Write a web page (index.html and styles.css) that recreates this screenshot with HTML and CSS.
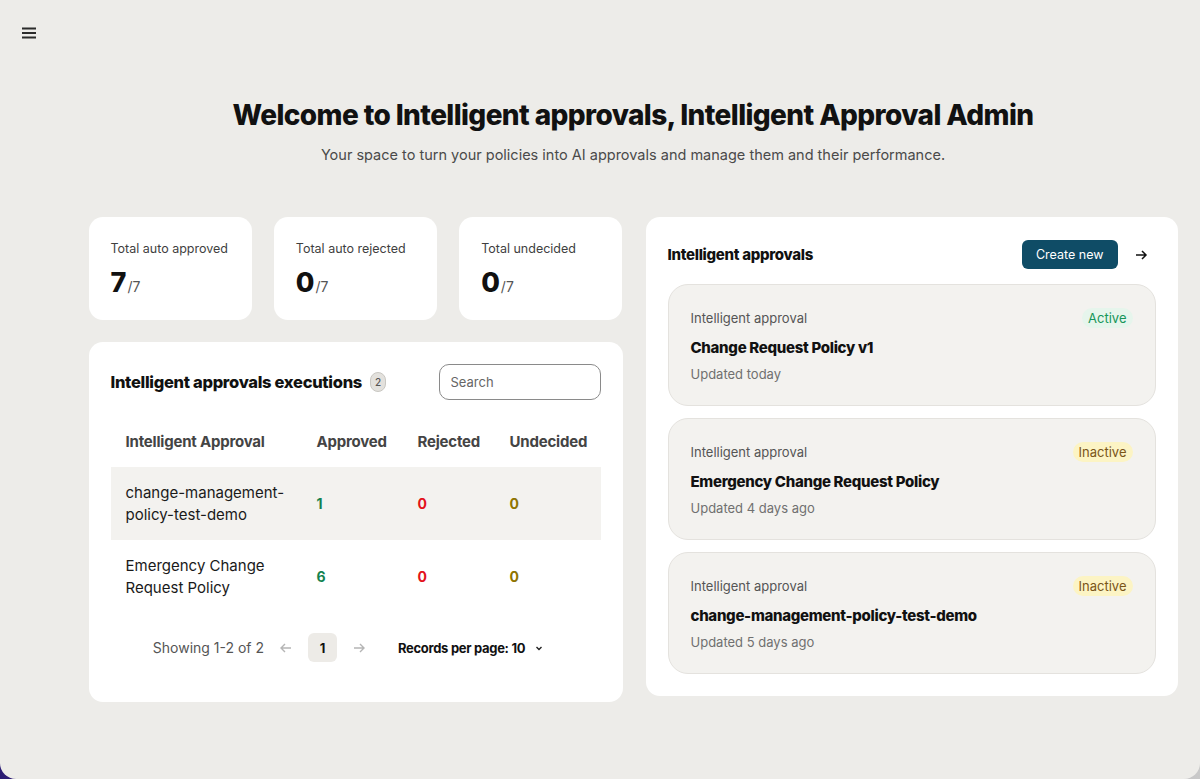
FILE: index.html
```html
<!DOCTYPE html>
<html lang="en">
  <head>
    <meta charset="UTF-8" />
    <meta name="viewport" content="width=device-width, initial-scale=1.0" />
    <title>Intelligent approvals</title>
    <link rel="stylesheet" href="styles.css">
  </head>
  <body>
    <div class="app">
      <aside class="rail">
        <button class="menu-button" aria-label="Menu">
          <svg width="16" height="12" viewBox="0 0 16 12">
            <path d="M1 1.5h14M1 6h14M1 10.5h14" stroke="#2b2b2b" stroke-width="1.8" fill="none" />
          </svg>
        </button>
      </aside>

      <main class="main">
        <header class="welcome">
          <h1>Welcome to Intelligent approvals, Intelligent Approval Admin</h1>
          <p>Your space to turn your policies into AI approvals and manage them and their performance.</p>
        </header>

        <div class="dashboard">
          <section class="left-column">
            <div class="stats">
              <div class="stat-card">
                <div class="stat-label">Total auto approved</div>
                <div class="stat-value">7<span>/7</span></div>
              </div>
              <div class="stat-card">
                <div class="stat-label">Total auto rejected</div>
                <div class="stat-value">0<span>/7</span></div>
              </div>
              <div class="stat-card">
                <div class="stat-label">Total undecided</div>
                <div class="stat-value">0<span>/7</span></div>
              </div>
            </div>

            <div class="card executions">
              <div class="executions-head">
                <h2>Intelligent approvals executions <span class="count">2</span></h2>
                <input class="search" type="text" placeholder="Search" />
              </div>

              <table class="exec-table">
                <colgroup>
                  <col class="col-name" />
                  <col class="col-approved" />
                  <col class="col-rejected" />
                  <col />
                </colgroup>
                <thead>
                  <tr>
                    <th>Intelligent Approval</th>
                    <th>Approved</th>
                    <th>Rejected</th>
                    <th>Undecided</th>
                  </tr>
                </thead>
                <tbody>
                  <tr class="shaded">
                    <td>change-management-<br />policy-test-demo</td>
                    <td class="num approved">1</td>
                    <td class="num rejected">0</td>
                    <td class="num undecided">0</td>
                  </tr>
                  <tr>
                    <td>Emergency Change<br />Request Policy</td>
                    <td class="num approved">6</td>
                    <td class="num rejected">0</td>
                    <td class="num undecided">0</td>
                  </tr>
                </tbody>
              </table>

              <div class="pagination">
                <span class="showing">Showing 1-2 of 2</span>
                <span class="page-arrow">
                  <svg width="14" height="14" viewBox="0 0 14 14"><path d="M12 7H2M6 3L2 7l4 4" stroke="#b5b5b5" stroke-width="1.4" fill="none" /></svg>
                </span>
                <span class="page-current">1</span>
                <span class="page-arrow">
                  <svg width="14" height="14" viewBox="0 0 14 14"><path d="M2 7h10M8 3l4 4-4 4" stroke="#b5b5b5" stroke-width="1.4" fill="none" /></svg>
                </span>
                <span class="per-page">Records per page: 10
                  <svg width="10" height="10" viewBox="0 0 10 10"><path d="M2.5 4l2.5 2.5L7.5 4" stroke="#222" stroke-width="1.4" fill="none" /></svg>
                </span>
              </div>
            </div>
          </section>

          <section class="card approvals">
            <div class="approvals-head">
              <h2>Intelligent approvals</h2>
              <button class="create-button">Create new</button>
              <span class="head-arrow">
                <svg width="14" height="14" viewBox="0 0 14 14"><path d="M2 7h10M8 3l4 4-4 4" stroke="#111" stroke-width="1.5" fill="none" /></svg>
              </span>
            </div>

            <div class="approval-item">
              <div class="item-top">
                <span class="item-kind">Intelligent approval</span>
                <span class="status active">Active</span>
              </div>
              <div class="item-title">Change Request Policy v1</div>
              <div class="item-updated">Updated today</div>
            </div>

            <div class="approval-item">
              <div class="item-top">
                <span class="item-kind">Intelligent approval</span>
                <span class="status inactive">Inactive</span>
              </div>
              <div class="item-title">Emergency Change Request Policy</div>
              <div class="item-updated">Updated 4 days ago</div>
            </div>

            <div class="approval-item">
              <div class="item-top">
                <span class="item-kind">Intelligent approval</span>
                <span class="status inactive">Inactive</span>
              </div>
              <div class="item-title">change-management-policy-test-demo</div>
              <div class="item-updated">Updated 5 days ago</div>
            </div>
          </section>
        </div>
      </main>
    </div>
  </body>
</html>
```

FILE: styles.css
```css
html,
body {
  margin: 0;
  height: 100%;
}

body {
  font-family: Inter, "Noto Sans", sans-serif;
  color: #111;
  background: linear-gradient(90deg, #2c1c74 0%, #6a5fa0 50%, #c9c9c9 100%);
  overflow: hidden;
}

.app {
  display: flex;
  height: 779px;
  background-color: #edece9;
  border-radius: 0 0 16px 16px;
}

.rail {
  width: 66px;
  flex-shrink: 0;
}

.menu-button {
  margin: 27px 0 0 21px;
  padding: 0;
  border: none;
  background: none;
  width: 16px;
  height: 12px;
  display: block;
}

.menu-button svg {
  display: block;
}

.main {
  flex: 1;
  display: flex;
  flex-direction: column;
  align-items: center;
}

.welcome {
  text-align: center;
  margin-top: 97px;
}

.welcome h1 {
  margin: 0;
  font-size: 28px;
  font-weight: 800;
  letter-spacing: -0.6px;
  line-height: 36px;
}

.welcome p {
  margin: 12px 0 0;
  font-size: 14.5px;
  color: #4a4a4a;
  line-height: 20px;
}

.dashboard {
  margin-top: 52px;
  width: 1089px;
  display: flex;
  gap: 23px;
  align-items: flex-start;
}

.left-column {
  width: 534px;
  display: flex;
  flex-direction: column;
  gap: 22px;
}

.stats {
  display: flex;
  gap: 22px;
}

.stat-card {
  flex: 1;
  height: 103px;
  box-sizing: border-box;
  padding: 24px 14px 24px 22px;
  background: #fff;
  border-radius: 14px;
}

.stat-label {
  font-size: 12.5px;
  color: #3f3f3f;
  line-height: 16px;
  white-space: nowrap;
}

.stat-value {
  margin-top: 10px;
  font-size: 27px;
  font-weight: 800;
  line-height: 32px;
}

.stat-value span {
  font-size: 14px;
  font-weight: 400;
  color: #555;
  margin-left: 1px;
}

.card {
  background: #fff;
  border-radius: 14px;
  box-sizing: border-box;
}

.executions {
  height: 360px;
  padding: 22px 22px 0;
}

.executions-head {
  display: flex;
  align-items: center;
  justify-content: space-between;
}

.executions-head h2 {
  margin: 0;
  font-size: 16.5px;
  font-weight: 800;
  letter-spacing: -0.3px;
  display: flex;
  align-items: center;
  gap: 8px;
}

.count {
  display: inline-flex;
  align-items: center;
  justify-content: center;
  width: 14px;
  height: 18px;
  border-radius: 9px;
  background: #e3e1dd;
  border: 1px solid #c9c7c2;
  font-size: 10px;
  font-weight: 500;
  color: #555;
  letter-spacing: 0;
}

.search {
  width: 162px;
  height: 36px;
  box-sizing: border-box;
  padding: 0 11px;
  border: 1px solid #8a8a8a;
  border-radius: 10px;
  font-family: inherit;
  font-size: 13px;
}

.search::placeholder {
  color: #666;
}

.exec-table {
  margin-top: 25px;
  width: 100%;
  border-collapse: collapse;
  table-layout: fixed;
}

.col-name {
  width: 191px;
}

.col-approved {
  width: 101px;
}

.col-rejected {
  width: 92px;
}

.exec-table th {
  text-align: left;
  font-size: 15px;
  font-weight: 700;
  color: #444;
  letter-spacing: -0.2px;
  padding: 8px 0 16px 15px;
  line-height: 18px;
  white-space: nowrap;
}

.exec-table td {
  font-size: 15px;
  line-height: 22px;
  color: #1a1a1a;
  padding: 14px 0 14px 15px;
  height: 45px;
}

.shaded {
  background: #f3f2ef;
}

.exec-table .num {
  font-size: 14px;
  font-weight: 700;
}

.exec-table .approved {
  color: #14824f;
}

.exec-table .rejected {
  color: #e3121b;
}

.exec-table .undecided {
  color: #8f7400;
}

.pagination {
  display: flex;
  align-items: center;
  justify-content: center;
  margin-top: 20px;
  padding-right: 14px;
}

.showing {
  font-size: 14px;
  color: #555;
}

.page-arrow {
  display: flex;
  margin: 0 15px;
}

.page-current {
  width: 29px;
  height: 29px;
  border-radius: 6px;
  background: #edebe7;
  display: flex;
  align-items: center;
  justify-content: center;
  font-size: 13px;
  font-weight: 700;
}

.per-page {
  margin-left: 17px;
  font-size: 13px;
  font-weight: 700;
  display: flex;
  align-items: center;
  gap: 9px;
  letter-spacing: -0.3px;
}

.approvals {
  width: 532px;
  padding: 23px 22px 22px;
}

.approvals-head {
  display: flex;
  align-items: center;
  margin-bottom: 15px;
}

.approvals-head h2 {
  margin: 0;
  flex: 1;
  font-size: 15px;
  font-weight: 800;
  letter-spacing: -0.3px;
}

.create-button {
  height: 29px;
  padding: 0 14px;
  border: none;
  border-radius: 6px;
  background: #0f4c66;
  color: #fff;
  font-family: inherit;
  font-size: 12.5px;
}

.head-arrow {
  display: flex;
  margin-left: 16px;
  margin-right: 8px;
}

.approval-item {
  width: 488px;
  box-sizing: border-box;
  height: 122px;
  margin-bottom: 12px;
  padding: 23px 22px 0;
  background: #f3f2ef;
  border: 1px solid #e4e2de;
  border-radius: 20px;
}

.approval-item:last-child {
  margin-bottom: 0;
}

.item-top {
  display: flex;
  align-items: center;
  justify-content: space-between;
  height: 20px;
}

.item-kind {
  font-size: 13px;
  color: #555;
}

.status {
  font-size: 13px;
  line-height: 20px;
  padding: 0 6px;
  border-radius: 10px;
}

.status.active {
  color: #16955a;
  background: #e6f5ec;
}

.status.inactive {
  color: #7a5518;
  background: #fcf4c4;
}

.item-title {
  margin-top: 10px;
  font-size: 15px;
  font-weight: 800;
  letter-spacing: -0.3px;
}

.item-updated {
  margin-top: 9px;
  font-size: 13px;
  color: #707070;
}
```
